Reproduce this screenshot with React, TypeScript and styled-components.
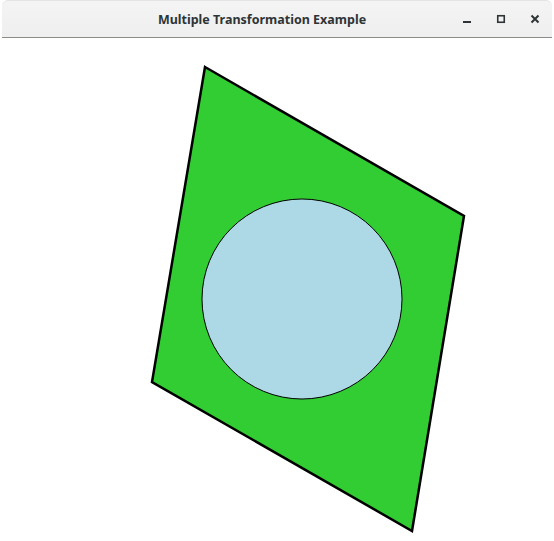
import React from "react";
import styled, { createGlobalStyle } from "styled-components";

const Global = createGlobalStyle`
  html, body { margin: 0; padding: 0; background: #ffffff; }
  body { font-family: "Noto Sans", "DejaVu Sans", sans-serif; }
`;

const Window = styled.div`
  width: 554px;
  height: 541px;
  display: flex;
  flex-direction: column;
  background: #ffffff;
  overflow: hidden;
`;

const TitleBar = styled.div`
  height: 38px;
  flex: none;
  margin: 0 2px;
  border-radius: 6px 6px 0 0;
  background: linear-gradient(#f4f4f4, #efefef);
  border-bottom: 1px solid #8d8d88;
  border-top: 1px solid #e4e4e4;
  box-sizing: border-box;
  display: grid;
  grid-template-columns: 1fr auto;
  align-items: center;
`;

const Title = styled.div`
  font-family: "Noto Sans", "DejaVu Sans", sans-serif;
  font-weight: bold;
  font-size: 12.5px;
  color: #2e3436;
  text-align: center;
  padding-left: 72px;
  padding-top: 1px;
`;

const Controls = styled.div`
  display: flex;
  align-items: center;
  padding-right: 0;
`;

const CtlButton = styled.div`
  width: 34px;
  height: 30px;
  display: flex;
  align-items: center;
  justify-content: center;
`;

const Canvas = styled.svg`
  display: block;
  flex: 1;
  width: 554px;
`;

export default function App() {
  return (
    <>
      <Global />
      <Window>
        <TitleBar>
          <Title>Multiple Transformation Example</Title>
          <Controls>
            <CtlButton>
              <svg width="10" height="10" viewBox="0 0 10 10">
                <rect x="1" y="7" width="8" height="2" fill="#2e3436" />
              </svg>
            </CtlButton>
            <CtlButton>
              <svg width="10" height="10" viewBox="0 0 10 10">
                <rect x="1.75" y="1.75" width="6.5" height="6.5" fill="none" stroke="#2e3436" strokeWidth="1.6" />
              </svg>
            </CtlButton>
            <CtlButton>
              <svg width="10" height="10" viewBox="0 0 10 10">
                <path d="M1.5 1.5 L8.5 8.5 M8.5 1.5 L1.5 8.5" stroke="#2e3436" strokeWidth="2" />
              </svg>
            </CtlButton>
          </Controls>
        </TitleBar>
        <Canvas viewBox="0 0 554 503">
          <polygon
            points="205,29 464,178 412,493 152,344"
            fill="#32cd32"
            stroke="#000"
            strokeWidth="2.5"
            strokeLinejoin="miter"
          />
          <circle cx="302" cy="261" r="100" fill="#add8e6" stroke="#000" strokeWidth="1" />
        </Canvas>
      </Window>
    </>
  );
}
